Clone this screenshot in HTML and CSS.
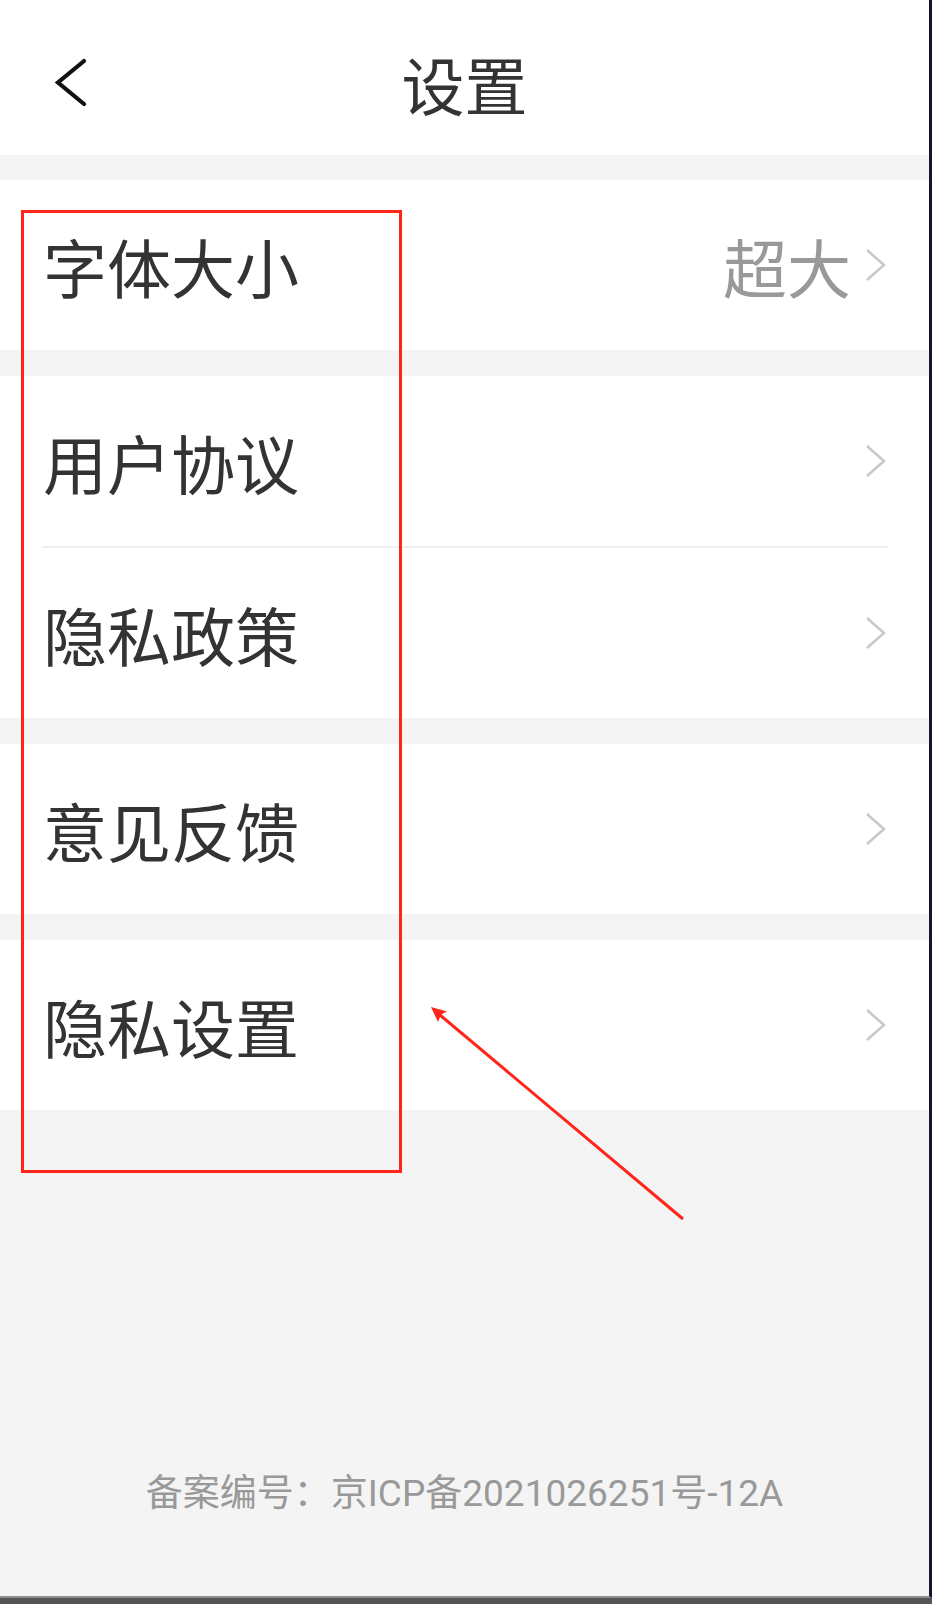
FILE: index.html
```html
<!DOCTYPE html>
<html lang="zh-CN">
<head>
  <meta charset="utf-8" />
  <title>设置</title>
  <meta name="viewport" content="width=device-width, initial-scale=1.0">
  <link rel="stylesheet" href="styles.css">
</head>
<body>
  <div class="screen">
    <div class="top-bar">
      <a class="back" href="#">
        <svg width="36" height="50" viewBox="0 0 36 50">
          <polyline points="30,3 4,24.5 30,46" fill="none" stroke="#111" stroke-width="4.2" stroke-linecap="round" stroke-linejoin="miter" />
        </svg>
      </a>
      <div class="title">设置</div>
      <div></div>
    </div>

    <div class="group">
      <div class="row">
        <span class="label">字体大小</span>
        <span class="value">超大</span>
        <svg class="arrow" width="22" height="34" viewBox="0 0 22 34"><polyline points="2,2 19,17 2,32" /></svg>
      </div>
    </div>

    <div class="group">
      <div class="row">
        <span class="label">用户协议</span>
        <svg class="arrow" width="22" height="34" viewBox="0 0 22 34"><polyline points="2,2 19,17 2,32" /></svg>
      </div>
      <div class="divider"></div>
      <div class="row">
        <span class="label">隐私政策</span>
        <svg class="arrow" width="22" height="34" viewBox="0 0 22 34"><polyline points="2,2 19,17 2,32" /></svg>
      </div>
    </div>

    <div class="group">
      <div class="row">
        <span class="label">意见反馈</span>
        <svg class="arrow" width="22" height="34" viewBox="0 0 22 34"><polyline points="2,2 19,17 2,32" /></svg>
      </div>
    </div>

    <div class="group">
      <div class="row">
        <span class="label">隐私设置</span>
        <svg class="arrow" width="22" height="34" viewBox="0 0 22 34"><polyline points="2,2 19,17 2,32" /></svg>
      </div>
    </div>

    <div class="footer">备案编号：京ICP备2021026251号-12A</div>

    <!-- red annotation marks on top of the screenshot -->
    <div class="mark-box"></div>
    <svg class="mark-arrow" width="932" height="1604" viewBox="0 0 932 1604">
      <line x1="683" y1="1219" x2="440" y2="1015" stroke="#ff2619" stroke-width="3" />
      <polygon points="431,1007 447,1011.5 441,1014.5 438,1022" fill="#ff2619" />
    </svg>
  </div>
</body>
</html>
```

FILE: styles.css
```css
body {
  margin: 0;
  background: #555;
  font-family: "Noto Sans CJK SC", Roboto, sans-serif;
  color: #333;
}
.screen {
  position: relative;
  width: 932px;
  height: 1598px;
  box-sizing: border-box;
  background: #f4f4f4;
  border-bottom: 2px solid #8f8f8f;
  border-right: 3px solid #15142a;
  display: flex;
  flex-direction: column;
}
.top-bar {
  height: 155px;
  box-sizing: border-box;
  padding-top: 10px;
  background: #fff;
  display: grid;
  grid-template-columns: 1fr auto 1fr;
  align-items: center;
}
.back {
  display: flex;
  padding-left: 54px;
}
.title {
  font-size: 63px;
  line-height: 1;
  color: #333;
}
.group {
  margin-top: 25px;
  background: #fff;
}
.group + .group {
  margin-top: 26px;
}
.row {
  height: 170px;
  display: flex;
  align-items: center;
  padding: 0 42px 0 43px;
}
.label {
  flex: 1;
  font-size: 64px;
  line-height: 1;
  color: #333;
}
.value {
  font-size: 64px;
  line-height: 1;
  color: #999;
  margin-right: 14px;
}
.arrow polyline {
  fill: none;
  stroke: #c9c9cc;
  stroke-width: 2.6;
}
.divider {
  height: 2px;
  margin: 0 41px 0 42px;
  background: #efefef;
}
.footer {
  margin-top: auto;
  padding-bottom: 82px;
  text-align: center;
  font-family: Roboto, "Noto Sans CJK SC", sans-serif;
  font-size: 37px;
  line-height: 40px;
  color: #999;
}
.mark-box {
  position: absolute;
  left: 21px;
  top: 210px;
  width: 375px;
  height: 957px;
  border: 3px solid #ff2619;
}
.mark-arrow {
  position: absolute;
  left: 0;
  top: 0;
}
```
